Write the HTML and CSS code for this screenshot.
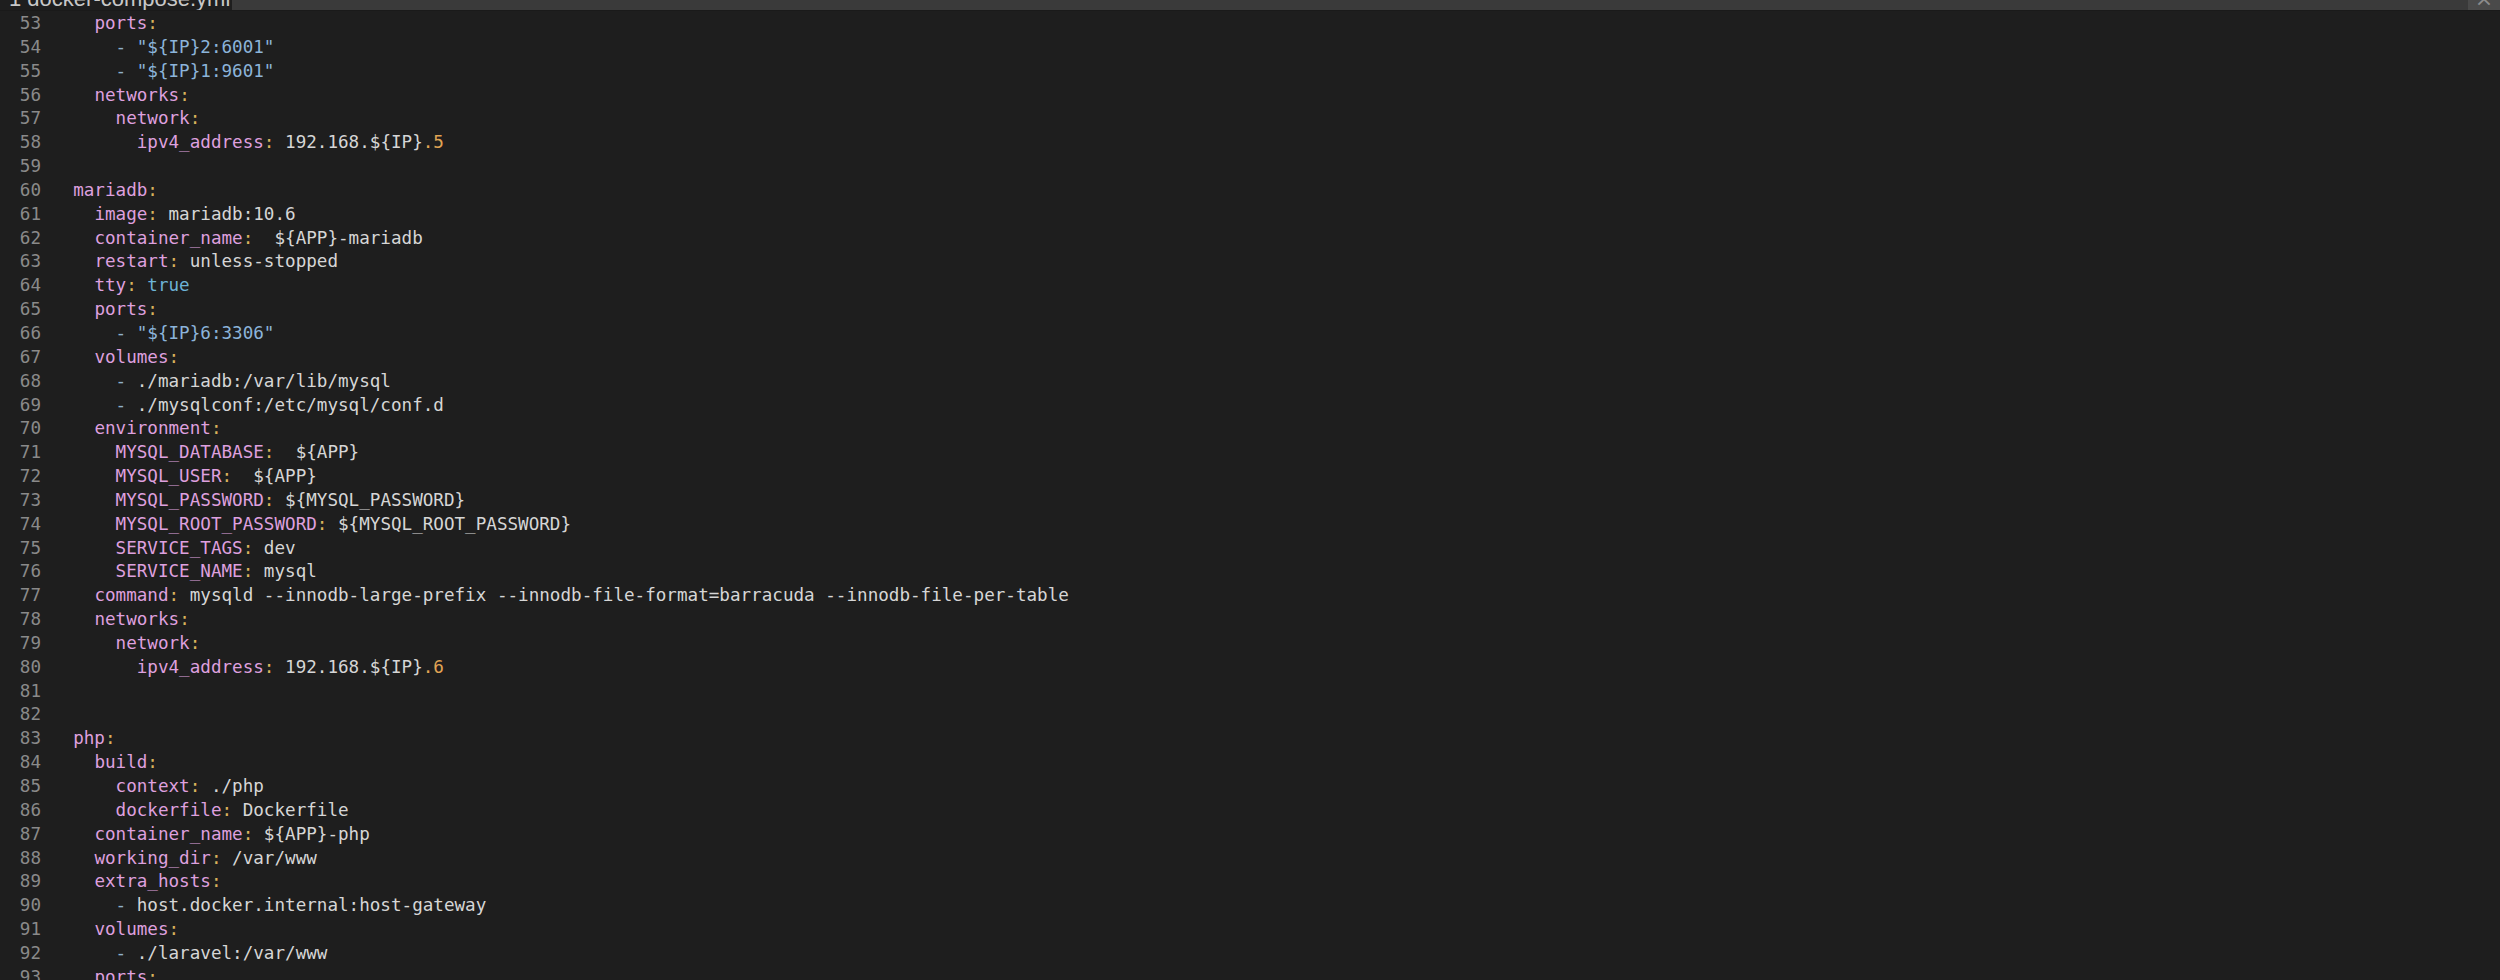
FILE: index.html
```html
<!DOCTYPE html>
<html lang="en">
  <head>
    <meta charset="UTF-8" />
    <title>docker-compose.yml</title>
    <link rel="stylesheet" href="styles.css">
  </head>
  <body>
    <div class="tabbar">
      <div class="tab"><span class="tab-label">1 docker-compose.yml</span></div>
      <div class="tab-rest"></div>
      <div class="tab-close"><span>&times;</span></div>
    </div>
    <main class="editor">
      <div class="ln"><span class="num">53</span><span class="code">    <span class="k">ports</span><span class="p">:</span></span></div>
      <div class="ln"><span class="num">54</span><span class="code">      <span class="d">-</span> <span class="s">"${IP}2:6001"</span></span></div>
      <div class="ln"><span class="num">55</span><span class="code">      <span class="d">-</span> <span class="s">"${IP}1:9601"</span></span></div>
      <div class="ln"><span class="num">56</span><span class="code">    <span class="k">networks</span><span class="p">:</span></span></div>
      <div class="ln"><span class="num">57</span><span class="code">      <span class="k">network</span><span class="p">:</span></span></div>
      <div class="ln"><span class="num">58</span><span class="code">        <span class="k">ipv4_address</span><span class="p">:</span> 192.168.${IP}<span class="n">.5</span></span></div>
      <div class="ln"><span class="num">59</span><span class="code"></span></div>
      <div class="ln"><span class="num">60</span><span class="code">  <span class="k">mariadb</span><span class="p">:</span></span></div>
      <div class="ln"><span class="num">61</span><span class="code">    <span class="k">image</span><span class="p">:</span> mariadb:10.6</span></div>
      <div class="ln"><span class="num">62</span><span class="code">    <span class="k">container_name</span><span class="p">:</span>  ${APP}-mariadb</span></div>
      <div class="ln"><span class="num">63</span><span class="code">    <span class="k">restart</span><span class="p">:</span> unless-stopped</span></div>
      <div class="ln"><span class="num">64</span><span class="code">    <span class="k">tty</span><span class="p">:</span> <span class="b">true</span></span></div>
      <div class="ln"><span class="num">65</span><span class="code">    <span class="k">ports</span><span class="p">:</span></span></div>
      <div class="ln"><span class="num">66</span><span class="code">      <span class="d">-</span> <span class="s">"${IP}6:3306"</span></span></div>
      <div class="ln"><span class="num">67</span><span class="code">    <span class="k">volumes</span><span class="p">:</span></span></div>
      <div class="ln"><span class="num">68</span><span class="code">      <span class="d">-</span> ./mariadb:/var/lib/mysql</span></div>
      <div class="ln"><span class="num">69</span><span class="code">      <span class="d">-</span> ./mysqlconf:/etc/mysql/conf.d</span></div>
      <div class="ln"><span class="num">70</span><span class="code">    <span class="k">environment</span><span class="p">:</span></span></div>
      <div class="ln"><span class="num">71</span><span class="code">      <span class="k">MYSQL_DATABASE</span><span class="p">:</span>  ${APP}</span></div>
      <div class="ln"><span class="num">72</span><span class="code">      <span class="k">MYSQL_USER</span><span class="p">:</span>  ${APP}</span></div>
      <div class="ln"><span class="num">73</span><span class="code">      <span class="k">MYSQL_PASSWORD</span><span class="p">:</span> ${MYSQL_PASSWORD}</span></div>
      <div class="ln"><span class="num">74</span><span class="code">      <span class="k">MYSQL_ROOT_PASSWORD</span><span class="p">:</span> ${MYSQL_ROOT_PASSWORD}</span></div>
      <div class="ln"><span class="num">75</span><span class="code">      <span class="k">SERVICE_TAGS</span><span class="p">:</span> dev</span></div>
      <div class="ln"><span class="num">76</span><span class="code">      <span class="k">SERVICE_NAME</span><span class="p">:</span> mysql</span></div>
      <div class="ln"><span class="num">77</span><span class="code">    <span class="k">command</span><span class="p">:</span> mysqld --innodb-large-prefix --innodb-file-format=barracuda --innodb-file-per-table</span></div>
      <div class="ln"><span class="num">78</span><span class="code">    <span class="k">networks</span><span class="p">:</span></span></div>
      <div class="ln"><span class="num">79</span><span class="code">      <span class="k">network</span><span class="p">:</span></span></div>
      <div class="ln"><span class="num">80</span><span class="code">        <span class="k">ipv4_address</span><span class="p">:</span> 192.168.${IP}<span class="n">.6</span></span></div>
      <div class="ln"><span class="num">81</span><span class="code"></span></div>
      <div class="ln"><span class="num">82</span><span class="code"></span></div>
      <div class="ln"><span class="num">83</span><span class="code">  <span class="k">php</span><span class="p">:</span></span></div>
      <div class="ln"><span class="num">84</span><span class="code">    <span class="k">build</span><span class="p">:</span></span></div>
      <div class="ln"><span class="num">85</span><span class="code">      <span class="k">context</span><span class="p">:</span> ./php</span></div>
      <div class="ln"><span class="num">86</span><span class="code">      <span class="k">dockerfile</span><span class="p">:</span> Dockerfile</span></div>
      <div class="ln"><span class="num">87</span><span class="code">    <span class="k">container_name</span><span class="p">:</span> ${APP}-php</span></div>
      <div class="ln"><span class="num">88</span><span class="code">    <span class="k">working_dir</span><span class="p">:</span> /var/www</span></div>
      <div class="ln"><span class="num">89</span><span class="code">    <span class="k">extra_hosts</span><span class="p">:</span></span></div>
      <div class="ln"><span class="num">90</span><span class="code">      <span class="d">-</span> host.docker.internal:host-gateway</span></div>
      <div class="ln"><span class="num">91</span><span class="code">    <span class="k">volumes</span><span class="p">:</span></span></div>
      <div class="ln"><span class="num">92</span><span class="code">      <span class="d">-</span> ./laravel:/var/www</span></div>
      <div class="ln"><span class="num">93</span><span class="code">    <span class="k">ports</span><span class="p">:</span></span></div>
    </main>
  </body>
</html>
```

FILE: styles.css
```css
body {
  margin: 0;
  background-color: #1e1e1e;
  overflow: hidden;
  height: 980px;
}

.tabbar {
  display: flex;
  height: 10px;
  overflow: hidden;
  border-bottom: 1px solid #1a1a1a;
}
.tab {
  width: 232px;
  background-color: #1e1e1e;
  overflow: hidden;
}
.tab-label {
  display: block;
  margin-top: -12px;
  padding-left: 9px;
  font-family: "Liberation Sans", Arial, sans-serif;
  font-size: 22px;
  line-height: 22px;
  color: #c8c8c8;
  white-space: nowrap;
}
.tab-rest {
  flex: 1;
  background-color: #3a3a3a;
}
.tab-close {
  width: 32px;
  background-color: #4a4a4a;
  overflow: hidden;
  text-align: center;
}
.tab-close span {
  display: block;
  margin-top: -12px;
  font-family: "DejaVu Sans", sans-serif;
  font-size: 22px;
  line-height: 22px;
  color: #8c8c8c;
}

.editor {
  padding-top: 1px;
  font-family: "DejaVu Sans Mono", "Liberation Mono", monospace;
  font-size: 17.6px;
  line-height: 23.85px;
  color: #d6d6d6;
}
.ln {
  display: flex;
  height: 23.85px;
}
.num {
  width: 41px;
  flex: none;
  text-align: right;
  color: #8a8a8a;
}
.code {
  padding-left: 11px;
  white-space: pre;
}

.k {
  color: #dea0df;
}
.p {
  color: #d9b25c;
}
.s {
  color: #8cb4da;
}
.d {
  color: #8fb0cc;
}
.b {
  color: #6db3d6;
}
.n {
  color: #e0a454;
}
```
